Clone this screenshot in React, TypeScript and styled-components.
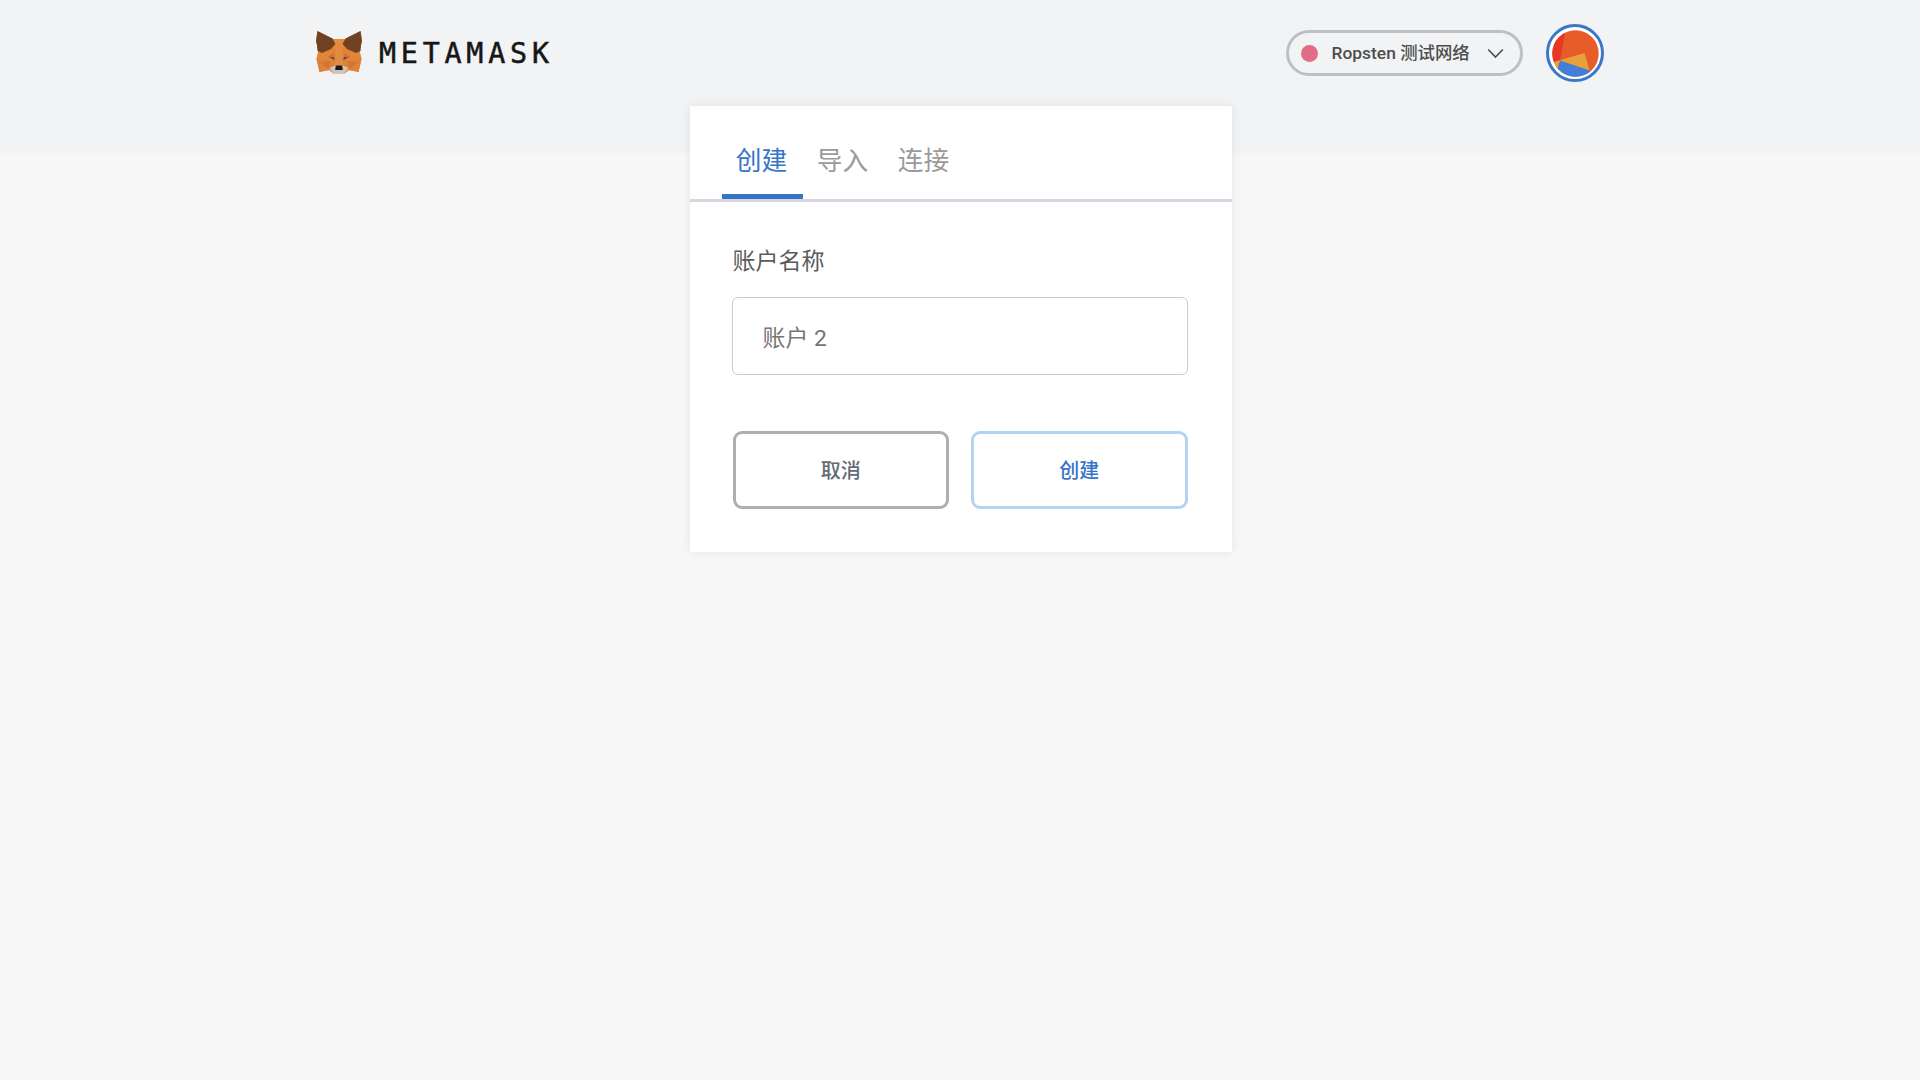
import React from "react";
import styled, { createGlobalStyle } from "styled-components";

const GlobalStyle = createGlobalStyle`
  * { box-sizing: border-box; }
  body {
    margin: 0;
    background: #f7f7f7;
    font-family: Roboto, "Noto Sans CJK SC", sans-serif;
  }
`;

const Page = styled.div`
  display: flex;
  flex-direction: column;
  align-items: center;
  min-height: 1080px;
  background: linear-gradient(#f2f3f5 153px, #f7f7f7 153px);
`;

const Header = styled.header`
  width: 1288px;
  height: 106px;
  display: flex;
  justify-content: space-between;
  align-items: center;
`;

const Brand = styled.div`
  display: flex;
  align-items: center;
  gap: 17px;
`;

const Wordmark = styled.span`
  padding-top: 2px;
  font-family: "DejaVu Sans Mono", monospace;
  font-size: 28.4px;
  line-height: 34px;
  letter-spacing: 4.75px;
  color: #161616;
  -webkit-text-stroke: 0.5px #161616;
`;

const HeaderActions = styled.div`
  display: flex;
  align-items: center;
  gap: 23px;
`;

const NetworkSelect = styled.div`
  width: 237px;
  height: 46px;
  display: flex;
  align-items: center;
  padding: 0 16px 0 12px;
  border: 3px solid #bbc0c5;
  border-radius: 23px;
  cursor: pointer;
`;

const NetworkDot = styled.span`
  width: 17px;
  height: 17px;
  border-radius: 50%;
  background: #e06c86;
`;

const NetworkName = styled.span`
  flex: 1;
  margin-left: 13.5px;
  font-size: 17.4px;
  line-height: 24px;
  font-weight: 500;
  color: #4d4d4d;
  white-space: nowrap;
`;

const Avatar = styled.div`
  width: 58px;
  height: 58px;
  display: flex;
  align-items: center;
  justify-content: center;
  border: 3px solid #3a78c7;
  border-radius: 50%;
  background: #fff;
`;

const Card = styled.main`
  width: 542px;
  height: 446px;
  margin-left: 1px;
  background: #fff;
  box-shadow: 0 0 9px rgba(0, 0, 0, 0.08);
`;

const Tabs = styled.nav`
  height: 96px;
  display: flex;
  align-items: flex-end;
  padding-left: 32px;
  border-bottom: 3px solid #d5d8e0;
`;

const Tab = styled.button<{ $active?: boolean }>`
  width: 81px;
  height: 72px;
  padding: 1px 1px 0 0;
  border: 0;
  border-bottom: 5px solid ${(p) => (p.$active ? "#3774c6" : "transparent")};
  background: none;
  font-family: inherit;
  font-size: 25.7px;
  line-height: 38px;
  color: ${(p) => (p.$active ? "#3774c6" : "#9a9a9a")};
`;

const Form = styled.form`
  display: flex;
  flex-direction: column;
  padding: 43px 44px 0 42px;
`;

const Label = styled.label`
  padding-left: 1px;
  font-size: 23px;
  line-height: 34px;
  color: #5b5b5b;
`;

const NameInput = styled.input`
  height: 78px;
  margin-top: 18px;
  padding: 5px 30px 0;
  border: 1px solid #cacdcf;
  border-radius: 6px;
  background: #fff;
  font-family: inherit;
  font-size: 22.9px;
  outline: none;
  &::placeholder { color: #757575; opacity: 1; }
`;

const Actions = styled.div`
  display: flex;
  gap: 22px;
  margin: 56px 0 0 1px;
`;

const Button = styled.button<{ $primary?: boolean }>`
  flex: 1;
  height: 78px;
  padding: 0 0 2px;
  border: 3px solid ${(p) => (p.$primary ? "#b3d3f0" : "#afafaf")};
  border-radius: 9px;
  background: #fff;
  font-family: inherit;
  font-size: 20px;
  font-weight: 500;
  color: ${(p) => (p.$primary ? "#3774c6" : "#636a73")};
`;

const Fox = () => (
  <svg width="46" height="44" viewBox="0 0 46 44">
    <path d="M1.5 0 17 8H29L44.5 0 46 10 43.5 20 45.5 28 42.5 41 33 39 28 43H18L13 39 3.5 41 .5 28 2.5 20 0 10Z" fill="#de8038" />
    <path d="M17 8H29L26.5 23 27 34H19L19.5 23Z" fill="#e48b42" />
    <path d="M5 20 19 13 15 29 .5 28 2.5 20ZM41 20 27 13 31 29 45.5 28 43.5 20Z" fill="#e38538" />
    <path d="M.5 28H15L13 39 3.5 41ZM45.5 28H31L33 39 42.5 41Z" fill="#e08139" />
    <path d="M14 30 4 31.5 13 38.5ZM32 30 42 31.5 33 38.5Z" fill="#d07535" />
    <path d="M1.5 0 16.500 7.500 19.500 13 15 18 6 22 1.500 20 1 14 0 10ZM44.500 0 29.500 7.500 26.500 13 31 18 40 22 44.500 20 45 14 46 10Z" fill="#704224" />
    <path d="M11 26 17 22.5 19 29ZM35 26 29 22.5 27 29Z" fill="#d16f3d" />
    <path d="M14 26 18 26.500 18.500 29ZM32 26 28 26.500 27.500 29Z" fill="#37404a" />
    <path d="M13.5 37 19 34.500H27L32.500 37 28 43H18Z" fill="#d1c4ba" />
    <path d="M19.800 34.500H26.200L26.800 39H19.200Z" fill="#17191b" />
  </svg>
);

const Chevron = () => (
  <svg width="17" height="11" viewBox="0 0 17 11" fill="none" stroke="#4d4d4d" strokeWidth="1.6">
    <path d="m1.2 1.5 7.3 7.5 7.3-7.5" />
  </svg>
);

const Identicon = () => (
  <svg width="47" height="47" viewBox="0 0 47 47">
    <defs>
      <clipPath id="disc"><circle cx="23.5" cy="23.5" r="23.2" /></clipPath>
    </defs>
    <g clipPath="url(#disc)">
      <path d="M0 0H47V47H0Z" fill="#e85c29" />
      <path d="M0 0H13.5L8 31 0 33Z" fill="#e53926" />
      <path d="M0 32.5 32.5 23 38 42 20 44 0 44Z" fill="#e8a13a" />
      <path d="M8 30.5 47 43.5V47H3Z" fill="#437fda" />
    </g>
  </svg>
);

export default function App() {
  return (
    <>
      <GlobalStyle />
      <Page>
        <Header>
          <Brand>
            <Fox />
            <Wordmark>METAMASK</Wordmark>
          </Brand>
          <HeaderActions>
            <NetworkSelect>
              <NetworkDot />
              <NetworkName>Ropsten 测试网络</NetworkName>
              <Chevron />
            </NetworkSelect>
            <Avatar><Identicon /></Avatar>
          </HeaderActions>
        </Header>
        <Card>
          <Tabs>
            <Tab $active>创建</Tab>
            <Tab>导入</Tab>
            <Tab>连接</Tab>
          </Tabs>
          <Form>
            <Label htmlFor="account-name">账户名称</Label>
            <NameInput id="account-name" placeholder="账户 2" />
            <Actions>
              <Button type="button">取消</Button>
              <Button type="button" $primary>创建</Button>
            </Actions>
          </Form>
        </Card>
      </Page>
    </>
  );
}
